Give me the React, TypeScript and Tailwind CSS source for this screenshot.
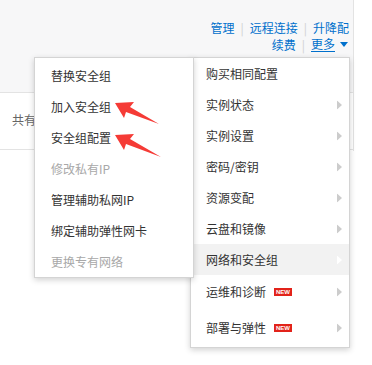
import React from 'react';

const leftItems = [
  { label: '替换安全组' },
  { label: '加入安全组' },
  { label: '安全组配置' },
  { label: '修改私有IP', disabled: true },
  { label: '管理辅助私网IP' },
  { label: '绑定辅助弹性网卡' },
  { label: '更换专有网络', disabled: true },
];

const rightItems = [
  { label: '购买相同配置', h: 'h-[31px]' },
  { label: '实例状态', sub: true, h: 'h-[31px]' },
  { label: '实例设置', sub: true, h: 'h-[31px]' },
  { label: '密码/密钥', sub: true, h: 'h-[31px]' },
  { label: '资源变配', sub: true, h: 'h-[31px]' },
  { label: '云盘和镜像', sub: true, h: 'h-[31px]' },
  { label: '网络和安全组', sub: true, active: true, h: 'h-[31px]' },
  { label: '运维和诊断', sub: true, isNew: true, h: 'h-[34px]' },
  { label: '部署与弹性', sub: true, isNew: true, h: 'h-[38px]' },
];

function Caret({ white }: { white?: boolean }) {
  return (
    <svg width="5" height="9" viewBox="0 0 5 9" className="absolute right-[7px] top-1/2 -translate-y-1/2">
      <path d="M0 0 L5 4.5 L0 9 Z" fill={white ? '#ffffff' : '#cccccc'} />
    </svg>
  );
}

function Sep() {
  return <span className="mx-[6px] text-[#d0d0d0]">|</span>;
}

export default function App() {
  return (
    <div className="relative w-[372px] h-[365px] bg-white overflow-hidden text-[12px] font-['Noto_Sans_CJK_SC','Noto_Sans',sans-serif]">
      {/* page behind the menus */}
      <div className="w-[354px] h-[151px] border-r border-[#e3e3e3]">
        <div className="h-[93px] bg-[#f7f7f8] border-b border-[#e3e3e3] flex flex-col items-end pr-[4px] pt-[19px] text-[#0070cc] leading-[17px]">
          <div className="flex items-center">
            <span>管理</span>
            <Sep />
            <span>远程连接</span>
            <Sep />
            <span>升降配</span>
          </div>
          <div className="flex items-center">
            <span>续费</span>
            <Sep />
            <span className="border-b border-[#0070cc] leading-[14px]">更多</span>
            <svg width="8" height="5" viewBox="0 0 8 5" className="ml-[5px] mr-[1px]">
              <path d="M0 0 L8 0 L4 5 Z" fill="#0070cc" />
            </svg>
          </div>
        </div>
        <div className="h-[57px] border-b border-[#e3e3e3] flex items-center pl-[12px] text-[#666]">
          <span className="mt-[-2px]">共有</span>
        </div>
      </div>

      {/* main dropdown */}
      <div className="absolute left-[190px] top-[57px] w-[160px] bg-white border border-[#d4d4d4] shadow-[0_2px_6px_rgba(0,0,0,0.18)] text-[#333]">
        {rightItems.map((it) => (
          <div
            key={it.label}
            className={`relative flex items-center pl-[15px] ${it.h} ${it.active ? 'bg-[#f2f2f2]' : ''}`}
          >
            <span>{it.label}</span>
            {it.isNew && (
              <span className="ml-[8px] bg-[#e2231a] text-white text-[6px] leading-[8px] font-bold px-[2px] font-['Liberation_Sans',sans-serif]">
                NEW
              </span>
            )}
            {it.sub && <Caret white={it.active} />}
          </div>
        ))}
      </div>

      {/* submenu */}
      <div className="absolute left-[34px] top-[57px] w-[160px] pt-[2px] bg-white border border-[#d4d4d4] shadow-[0_2px_6px_rgba(0,0,0,0.18)]">
        {leftItems.map((it) => (
          <div
            key={it.label}
            className={`h-[31px] flex items-center pl-[16px] ${it.disabled ? 'text-[#a8a8a8]' : 'text-[#333]'}`}
          >
            {it.label}
          </div>
        ))}
      </div>

      {/* annotation arrows */}
      <svg className="absolute left-0 top-0 pointer-events-none" width="372" height="365">
        <polygon points="115,103 134,102 130,107 159,124 126,112 124,118" fill="#f53b36" />
        <polygon points="115,135 134,134 130,139 161,157 126,144 124,150" fill="#f53b36" />
      </svg>
    </div>
  );
}
